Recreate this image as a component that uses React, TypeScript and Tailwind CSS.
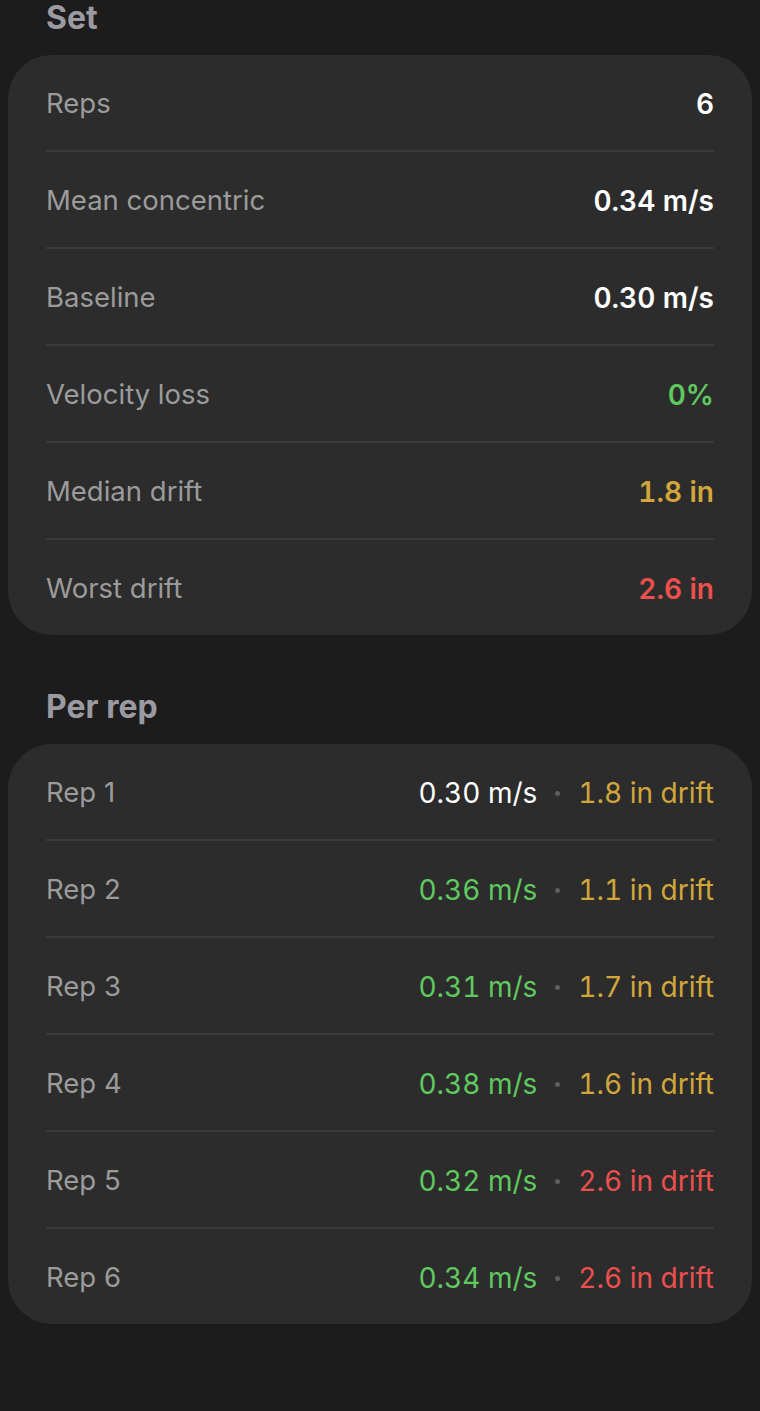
const font = { fontFamily: 'Inter, "Noto Sans", sans-serif' };

type Tone = "white" | "green" | "gold" | "red";

const toneClass: Record<Tone, string> = {
  white: "text-white",
  green: "text-[#5fc95f]",
  gold: "text-[#d2a63a]",
  red: "text-[#ec504c]",
};

const setRows: { label: string; value: string; tone: Tone }[] = [
  { label: "Reps", value: "6", tone: "white" },
  { label: "Mean concentric", value: "0.34 m/s", tone: "white" },
  { label: "Baseline", value: "0.30 m/s", tone: "white" },
  { label: "Velocity loss", value: "0%", tone: "green" },
  { label: "Median drift", value: "1.8 in", tone: "gold" },
  { label: "Worst drift", value: "2.6 in", tone: "red" },
];

const reps: { speed: string; speedTone: Tone; drift: string; driftTone: Tone }[] = [
  { speed: "0.30 m/s", speedTone: "white", drift: "1.8 in drift", driftTone: "gold" },
  { speed: "0.36 m/s", speedTone: "green", drift: "1.1 in drift", driftTone: "gold" },
  { speed: "0.31 m/s", speedTone: "green", drift: "1.7 in drift", driftTone: "gold" },
  { speed: "0.38 m/s", speedTone: "green", drift: "1.6 in drift", driftTone: "gold" },
  { speed: "0.32 m/s", speedTone: "green", drift: "2.6 in drift", driftTone: "red" },
  { speed: "0.34 m/s", speedTone: "green", drift: "2.6 in drift", driftTone: "red" },
];

function Heading({ children }: { children: string }) {
  return (
    <h2 className="pl-[38px] text-[32px] font-bold leading-[36px] text-[#9a9aa0]">{children}</h2>
  );
}

function Card({ children }: { children: React.ReactNode }) {
  return <div className="rounded-[44px] bg-[#2c2c2c] px-[38px]">{children}</div>;
}

function Row({ label, children, last }: { label: string; children: React.ReactNode; last?: boolean }) {
  return (
    <div
      className={`flex items-center justify-between pt-[3px] ${last ? "h-[95px]" : "h-[97px] border-b-2 border-[#3a3a3a]"}`}
    >
      <span className="text-[27.5px] text-[#9b9b9b]">{label}</span>
      {children}
    </div>
  );
}

export default function App() {
  return (
    <div className="min-h-[1411px] bg-[#1c1c1c] px-2" style={font}>
      <Heading>Set</Heading>
      <div className="mt-[19px]">
        <Card>
          {setRows.map((r, i) => (
            <Row key={r.label} label={r.label} last={i === setRows.length - 1}>
              <span className={`text-[28px] font-semibold tabular-nums ${toneClass[r.tone]}`}>{r.value}</span>
            </Row>
          ))}
        </Card>
      </div>

      <div className="mt-[54px]">
        <Heading>Per rep</Heading>
      </div>
      <div className="mt-[19px]">
        <Card>
          {reps.map((r, i) => (
            <Row key={i} label={`Rep ${i + 1}`} last={i === reps.length - 1}>
              <span className="flex items-center text-[28px] tabular-nums">
                <span className={toneClass[r.speedTone]}>{r.speed}</span>
                <span className="mx-[18px] size-[5px] rounded-full bg-[#5e5e5e]" aria-hidden />
                <span className={toneClass[r.driftTone]}>{r.drift}</span>
              </span>
            </Row>
          ))}
        </Card>
      </div>
    </div>
  );
}
